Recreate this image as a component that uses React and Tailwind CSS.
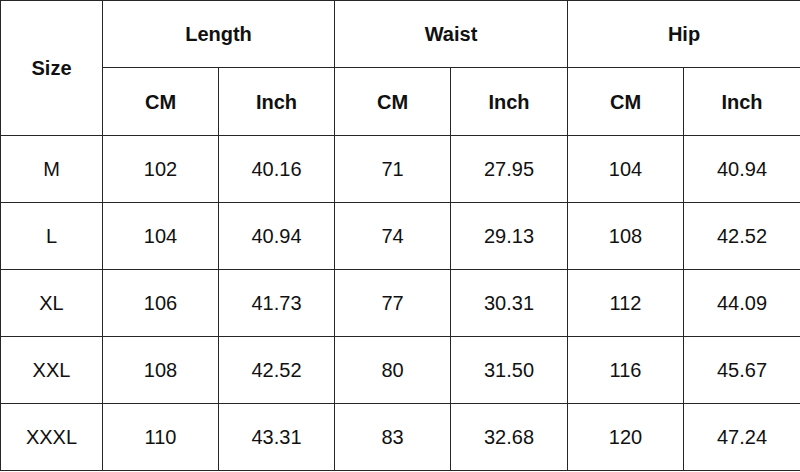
const rows = [
  ['M', '102', '40.16', '71', '27.95', '104', '40.94'],
  ['L', '104', '40.94', '74', '29.13', '108', '42.52'],
  ['XL', '106', '41.73', '77', '30.31', '112', '44.09'],
  ['XXL', '108', '42.52', '80', '31.50', '116', '45.67'],
  ['XXXL', '110', '43.31', '83', '32.68', '120', '47.24'],
];

const cell = 'border border-[#262626] text-center align-middle';

export default function App() {
  return (
    <div className="w-[800px] h-[472px] bg-white text-[#111] font-['Liberation_Sans',Arial,sans-serif]">
      <table className="border-collapse table-fixed w-[800px] h-[471px]">
        <colgroup>
          <col className="w-[102px]" />
          <col className="w-[116px]" />
          <col className="w-[116px]" />
          <col className="w-[116px]" />
          <col className="w-[117px]" />
          <col className="w-[116px]" />
          <col className="w-[117px]" />
        </colgroup>
        <thead className="text-[20px] font-bold">
          <tr className="h-[67px]">
            <th rowSpan={2} className={cell}>Size</th>
            <th colSpan={2} className={cell}>Length</th>
            <th colSpan={2} className={cell}>Waist</th>
            <th colSpan={2} className={cell}>Hip</th>
          </tr>
          <tr className="h-[68px]">
            <th className={cell}>CM</th>
            <th className={cell}>Inch</th>
            <th className={cell}>CM</th>
            <th className={cell}>Inch</th>
            <th className={cell}>CM</th>
            <th className={cell}>Inch</th>
          </tr>
        </thead>
        <tbody className="text-[20px]">
          {rows.map((r) => (
            <tr key={r[0]} className="h-[67px]">
              {r.map((v, i) => (
                <td key={i} className={cell}>{v}</td>
              ))}
            </tr>
          ))}
        </tbody>
      </table>
    </div>
  );
}
